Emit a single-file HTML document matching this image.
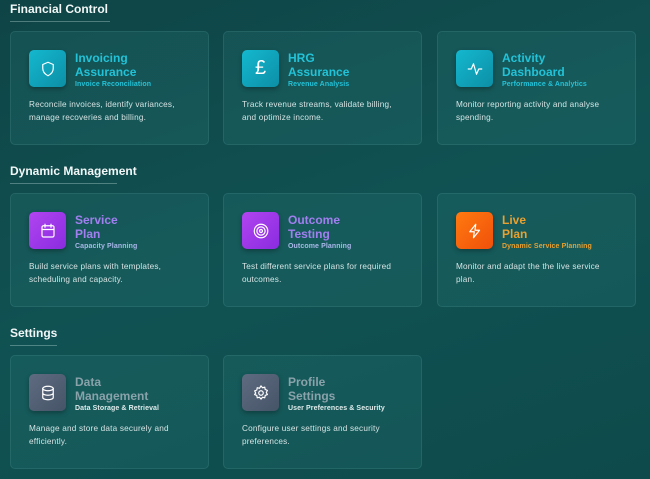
<!DOCTYPE html>
<html><head><style>
*{margin:0;padding:0;box-sizing:border-box}
body{width:650px;height:479px;overflow:hidden;background:linear-gradient(160deg,#0f4446 0%,#105253 50%,#0e4a4b 100%);font-family:"Liberation Sans",sans-serif;position:relative}
.h{position:absolute;left:10px;color:#f2f7f7;font-size:12px;font-weight:bold}
.u{position:absolute;left:10px;height:1px;background:rgba(200,230,230,.35)}
.c{position:absolute;width:199px;height:114px;border-radius:5px;background:rgba(40,120,120,.25);border:1px solid rgba(120,190,190,.15)}
.i{position:absolute;left:18px;top:18px;width:37px;height:37px;border-radius:5px;display:flex;align-items:center;justify-content:center;box-shadow:0 2px 5px rgba(0,0,0,.3)}
.t{position:absolute;left:64px;top:19px;font-size:12px;font-weight:bold;line-height:14px}
.s{position:absolute;left:64px;top:49px;font-size:7px;font-weight:bold;letter-spacing:.1px}
.d{position:absolute;left:18px;top:66px;width:162px;font-size:8.2px;letter-spacing:.2px;line-height:13px;color:#d6e4e4}
.cy .i{background:linear-gradient(135deg,#14b8cf,#0c8fa6)} .cy .t,.cy .s{color:#22c3d8}
.pu .i{background:linear-gradient(135deg,#b145f0,#8a2be0)} .pu .t{color:#a27ff0} .pu .s{color:#a8b8e8}
.or .i{background:linear-gradient(135deg,#ff7a10,#f0500a)} .or .t,.or .s{color:#e8a030}
.gr .i{background:linear-gradient(135deg,#5e6b80,#465468)} .gr .t{color:#8aa2aa} .gr .s{color:#e0ecec}
svg{width:18px;height:18px;fill:none;stroke:#fff;stroke-width:1.6;stroke-linecap:round;stroke-linejoin:round}
</style></head><body>
<div class="h" style="top:2px">Financial Control</div><div class="u" style="top:21px;width:100px"></div>
<div class="h" style="top:164px">Dynamic Management</div><div class="u" style="top:183px;width:107px"></div>
<div class="h" style="top:326px">Settings</div><div class="u" style="top:345px;width:47px"></div>

<div class="c cy" style="left:10px;top:31px"><div class="i"><svg viewBox="0 0 24 24"><path d="M12 3l7 3v5c0 5-3 8-7 10-4-2-7-5-7-10V6z"/></svg></div><div class="t">Invoicing<br>Assurance</div><div class="s">Invoice Reconciliation</div><div class="d">Reconcile invoices, identify variances, manage recoveries and billing.</div></div>
<div class="c cy" style="left:223px;top:31px"><div class="i"><span style="color:#fff;font-size:20px">£</span></div><div class="t">HRG<br>Assurance</div><div class="s">Revenue Analysis</div><div class="d">Track revenue streams, validate billing, and optimize income.</div></div>
<div class="c cy" style="left:437px;top:31px"><div class="i"><svg viewBox="0 0 24 24"><path d="M3 12h4l3-7 4 14 3-7h4"/></svg></div><div class="t">Activity<br>Dashboard</div><div class="s">Performance &amp; Analytics</div><div class="d">Monitor reporting activity and analyse spending.</div></div>

<div class="c pu" style="left:10px;top:193px"><div class="i"><svg viewBox="0 0 24 24"><rect x="4" y="5" width="16" height="15" rx="2"/><path d="M4 10h16M8 3v4M16 3v4"/></svg></div><div class="t">Service<br>Plan</div><div class="s">Capacity Planning</div><div class="d">Build service plans with templates, scheduling and capacity.</div></div>
<div class="c pu" style="left:223px;top:193px"><div class="i"><svg viewBox="0 0 24 24"><circle cx="12" cy="12" r="9"/><circle cx="12" cy="12" r="5.5"/><circle cx="12" cy="12" r="2"/></svg></div><div class="t">Outcome<br>Testing</div><div class="s">Outcome Planning</div><div class="d">Test different service plans for required outcomes.</div></div>
<div class="c or" style="left:437px;top:193px"><div class="i"><svg viewBox="0 0 24 24"><path d="M13 3L5 13h6l-1 8 8-10h-6z"/></svg></div><div class="t">Live<br>Plan</div><div class="s">Dynamic Service Planning</div><div class="d">Monitor and adapt the the live service<br>plan.</div></div>

<div class="c gr" style="left:10px;top:355px"><div class="i"><svg viewBox="0 0 24 24"><ellipse cx="12" cy="6" rx="7" ry="3"/><path d="M5 6v12c0 1.7 3 3 7 3s7-1.3 7-3V6M5 12c0 1.7 3 3 7 3s7-1.3 7-3"/></svg></div><div class="t">Data<br>Management</div><div class="s">Data Storage &amp; Retrieval</div><div class="d">Manage and store data securely and efficiently.</div></div>
<div class="c gr" style="left:223px;top:355px"><div class="i"><svg viewBox="0 0 24 24"><circle cx="12" cy="12" r="3"/><path d="M12 2.5l2 2.5 3-.8.6 3.1 2.9 1.2-1.4 2.8 1.4 2.8-2.9 1.2-.6 3.1-3-.8-2 2.5-2-2.5-3 .8-.6-3.1-2.9-1.2L4.9 12 3.5 9.2l2.9-1.2.6-3.1 3 .8z"/></svg></div><div class="t">Profile<br>Settings</div><div class="s">User Preferences &amp; Security</div><div class="d">Configure user settings and security preferences.</div></div>
</body></html>
